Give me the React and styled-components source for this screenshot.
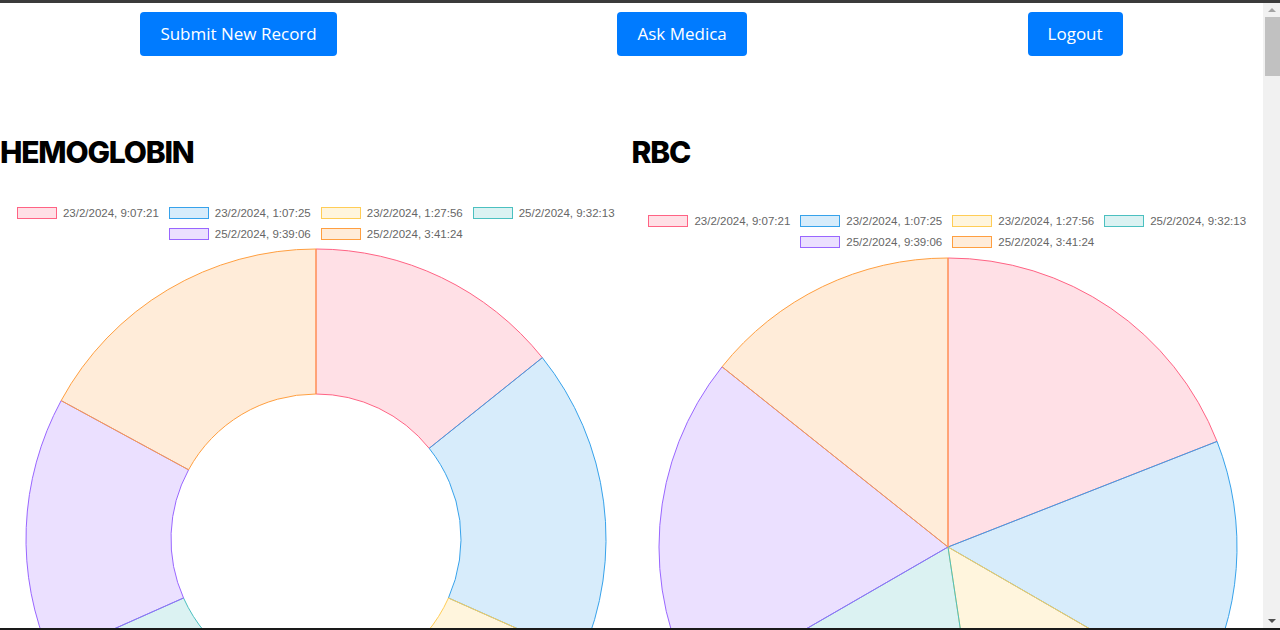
import React from "react";
import styled, { createGlobalStyle } from "styled-components";

const GlobalStyle = createGlobalStyle`
  html, body {
    margin: 0;
    padding: 0;
    background: #fff;
  }
  body {
    font-family: "Open Sans", "Liberation Sans", sans-serif;
  }
`;

const FrameTop = styled.div`
  position: fixed;
  top: 0;
  left: 0;
  right: 0;
  height: 3px;
  background: #3b3b3b;
  z-index: 10;
`;

const FrameBottom = styled.div`
  position: fixed;
  bottom: 0;
  left: 0;
  right: 0;
  height: 2px;
  background: #1a1a1a;
  z-index: 10;
`;

const Scrollbar = styled.div`
  position: fixed;
  top: 3px;
  right: 0;
  bottom: 2px;
  width: 17px;
  background: #f1f1f1;
  display: flex;
  flex-direction: column;
  z-index: 5;
`;

const ScrollArrow = styled.div`
  height: 14px;
  display: flex;
  align-items: center;
  justify-content: center;

  &::before {
    content: "";
    width: 0;
    height: 0;
    border-left: 4px solid transparent;
    border-right: 4px solid transparent;
    ${(p) =>
      p.$down
        ? `border-top: 4px solid #505050;`
        : `border-bottom: 4px solid #a3a3a3;`}
  }
`;

const ScrollThumb = styled.div`
  height: 59px;
  margin-left: 2px;
  background: #c1c1c1;
`;

const ScrollSpace = styled.div`
  flex: 1;
`;

const Page = styled.div`
  padding-top: 12px;
  margin-right: 17px;
  min-height: 1400px;
`;

const NavBar = styled.nav`
  display: flex;
  justify-content: space-around;
  align-items: center;
`;

const NavButton = styled.button`
  height: 44px;
  padding: 0 20px;
  border: none;
  border-radius: 4px;
  background: #007bff;
  color: #fff;
  font-family: "Open Sans", "Liberation Sans", sans-serif;
  font-size: 17px;
  line-height: 42px;
  cursor: pointer;
`;

const Charts = styled.div`
  display: grid;
  grid-template-columns: 1fr 1fr;
  margin-top: 72px;
`;

const ChartCard = styled.section`
  display: flex;
  flex-direction: column;
`;

const Title = styled.h1`
  margin: 0;
  font-family: "Inter", "Liberation Sans", sans-serif;
  font-size: 30px;
  font-weight: 800;
  line-height: 48px;
  letter-spacing: -1.2px;
  color: #000;
`;

const Legend = styled.ul`
  list-style: none;
  margin: ${(p) => p.$offset}px 0 0;
  padding: 0;
  display: flex;
  flex-wrap: wrap;
  justify-content: center;
  column-gap: 10px;
`;

const LegendItem = styled.li`
  display: flex;
  align-items: center;
  height: 21px;
  font-family: "Liberation Sans", Arial, sans-serif;
  font-size: 11.5px;
  color: #666;
`;

const Swatch = styled.span`
  box-sizing: border-box;
  width: 40px;
  height: 12px;
  margin-right: 6px;
  border: 1px solid ${(p) => p.$stroke};
  background: ${(p) => p.$fill};
`;

const ChartSvg = styled.svg`
  display: block;
  width: 100%;
  height: 600px;
  margin-top: ${(p) => p.$gap}px;
`;

const palette = [
  [255, 99, 132],
  [54, 162, 235],
  [255, 205, 86],
  [75, 192, 192],
  [153, 102, 255],
  [255, 159, 64],
];

const labels = [
  "23/2/2024, 9:07:21",
  "23/2/2024, 1:07:25",
  "23/2/2024, 1:27:56",
  "25/2/2024, 9:32:13",
  "25/2/2024, 9:39:06",
  "25/2/2024, 3:41:24",
];

const charts = [
  {
    title: "HEMOGLOBIN",
    values: [51.3, 62.7, 66, 66, 52.5, 61.5],
    cutout: 0.5,
    legendOffset: 26,
    gap: 1,
    radius: 290,
  },
  {
    title: "RBC",
    values: [4, 3, 3, 4, 4, 3],
    cutout: 0,
    legendOffset: 34,
    gap: 2,
    radius: 289,
  },
];

const rgb = (c, a) => (a === undefined ? `rgb(${c.join(",")})` : `rgba(${c.join(",")},${a})`);

const point = (cx, cy, r, a) => [cx + r * Math.cos(a), cy + r * Math.sin(a)];

const arcPath = (cx, cy, r, ir, a0, a1) => {
  const large = a1 - a0 > Math.PI ? 1 : 0;
  const [x0, y0] = point(cx, cy, r, a0);
  const [x1, y1] = point(cx, cy, r, a1);
  if (ir <= 0) {
    return `M${cx} ${cy} L${x0} ${y0} A${r} ${r} 0 ${large} 1 ${x1} ${y1} Z`;
  }
  const [x2, y2] = point(cx, cy, ir, a1);
  const [x3, y3] = point(cx, cy, ir, a0);
  return `M${x0} ${y0} A${r} ${r} 0 ${large} 1 ${x1} ${y1} L${x2} ${y2} A${ir} ${ir} 0 ${large} 0 ${x3} ${y3} Z`;
};

const PieChart = ({ values, cutout, radius, gap }) => {
  const total = values.reduce((s, v) => s + v, 0);
  const cx = 316;
  const cy = radius + 4;
  let angle = -Math.PI / 2;
  return (
    <ChartSvg $gap={gap} viewBox="0 0 631 600" preserveAspectRatio="xMinYMin meet">
      {values.map((v, i) => {
        const start = angle;
        angle += (v / total) * Math.PI * 2;
        return (
          <path
            key={i}
            d={arcPath(cx, cy, radius, radius * cutout, start, angle)}
            fill={rgb(palette[i], 0.2)}
            stroke={rgb(palette[i])}
            strokeWidth="1"
          />
        );
      })}
    </ChartSvg>
  );
};

const App = () => {
  return (
    <>
      <GlobalStyle />
      <FrameTop />
      <Page>
        <NavBar>
          <NavButton>Submit New Record</NavButton>
          <NavButton>Ask Medica</NavButton>
          <NavButton>Logout</NavButton>
        </NavBar>
        <Charts>
          {charts.map((chart) => (
            <ChartCard key={chart.title}>
              <Title>{chart.title}</Title>
              <Legend $offset={chart.legendOffset}>
                {labels.map((label, i) => (
                  <LegendItem key={label}>
                    <Swatch $stroke={rgb(palette[i])} $fill={rgb(palette[i], 0.2)} />
                    {label}
                  </LegendItem>
                ))}
              </Legend>
              <PieChart {...chart} />
            </ChartCard>
          ))}
        </Charts>
      </Page>
      <Scrollbar>
        <ScrollArrow />
        <ScrollThumb />
        <ScrollSpace />
        <ScrollArrow $down />
      </Scrollbar>
      <FrameBottom />
    </>
  );
};

export default App;
